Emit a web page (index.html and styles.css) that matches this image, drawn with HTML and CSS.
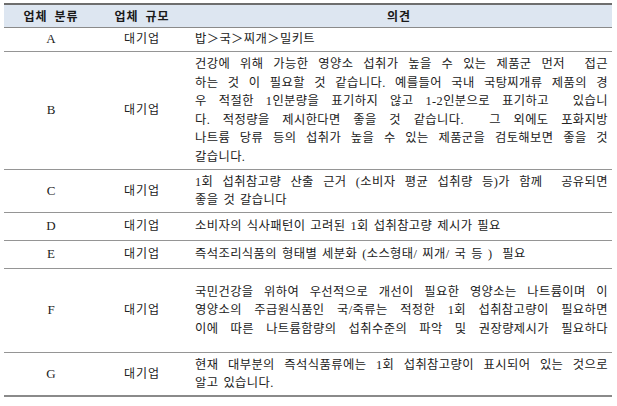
FILE: index.html
```html
<!DOCTYPE html>
<html lang="ko">
<head>
<meta charset="utf-8">
<title>업체 의견</title>
<link rel="stylesheet" href="styles.css">
</head>
<body>
<table class="opinions">
  <colgroup>
    <col class="c-kind">
    <col class="c-size">
    <col class="c-text">
  </colgroup>
  <thead>
    <tr>
      <th>업체 분류</th>
      <th>업체 규모</th>
      <th>의견</th>
    </tr>
  </thead>
  <tbody>
    <tr class="r-a">
      <td class="lab">A</td>
      <td class="size">대기업</td>
      <td class="txt"><span class="ln">밥＞국＞찌개＞밀키트</span></td>
    </tr>
    <tr class="r-b">
      <td class="lab">B</td>
      <td class="size">대기업</td>
      <td class="txt">
        <span class="ln j">건강에 위해 가능한 영양소 섭취가 높을 수 있는 제품군 먼저 &nbsp;접근</span>
        <span class="ln j">하는 것 이 필요할 것 같습니다. 예를들어 국내 국탕찌개류 제품의 경</span>
        <span class="ln j">우 적절한 1인분량을 표기하지 않고 1-2인분으로 표기하고 &nbsp;있습니</span>
        <span class="ln j">다. 적정량을 제시한다면 좋을 것 같습니다. &nbsp;그 외에도 포화지방</span>
        <span class="ln j">나트륨 당류 등의 섭취가 높을 수 있는 제품군을 검토해보면 좋을 것</span>
        <span class="ln">갈습니다.</span>
      </td>
    </tr>
    <tr class="r-c">
      <td class="lab">C</td>
      <td class="size">대기업</td>
      <td class="txt">
        <span class="ln j">1회 섭취참고량 산출 근거 (소비자 평균 섭취량 등)가 함께 &nbsp;공유되면</span>
        <span class="ln">좋을 것 갈습니다</span>
      </td>
    </tr>
    <tr class="r-d">
      <td class="lab">D</td>
      <td class="size">대기업</td>
      <td class="txt"><span class="ln">소비자의 식사패턴이 고려된 1회 섭취참고량 제시가 필요</span></td>
    </tr>
    <tr class="r-e">
      <td class="lab">E</td>
      <td class="size">대기업</td>
      <td class="txt"><span class="ln">즉석조리식품의 형태별 세분화 (소스형태/ 찌개/ 국 등 ) &nbsp;필요</span></td>
    </tr>
    <tr class="r-f">
      <td class="lab">F</td>
      <td class="size">대기업</td>
      <td class="txt">
        <span class="ln j">국민건강을 위하여 우선적으로 개선이 필요한 영양소는 나트륨이며 이</span>
        <span class="ln j">영양소의 주급원식품인 국/죽류는 적정한 1회 섭취참고량이 필요하면</span>
        <span class="ln j">이에 따른 나트륨함량의 섭취수준의 파악 및 권장량제시가 필요하다</span>
      </td>
    </tr>
    <tr class="r-g">
      <td class="lab">G</td>
      <td class="size">대기업</td>
      <td class="txt">
        <span class="ln j">현재 대부분의 즉석식품류에는 1회 섭취참고량이 표시되어 있는 것으로</span>
        <span class="ln">알고 있습니다.</span>
      </td>
    </tr>
  </tbody>
</table>
</body>
</html>
```

FILE: styles.css
```css
html, body {
  margin: 0;
  padding: 0;
  background: #ffffff;
}

body {
  padding: 3px 0 0 4px;
  font-family: "Liberation Serif", "Noto Sans CJK KR", serif;
  color: #222222;
}

.opinions {
  width: 608px;
  border-collapse: collapse;
  table-layout: fixed;
  font-size: 12.3px;
  font-weight: 400;
  letter-spacing: 0.4px;
  word-spacing: 1.5px;
}

.c-kind { width: 94px; }
.c-size { width: 88px; }
.c-text { width: 426px; }

.opinions th {
  height: 22px;
  padding: 0;
  background: #dde6f1;
  border-top: 2px solid #6e6e6e;
  border-bottom: 1px solid #8a8a8a;
  font-weight: 700;
  font-size: 12px;
  letter-spacing: 1px;
  word-spacing: 3px;
  text-align: center;
  vertical-align: middle;
  color: #1a1a1a;
}

.opinions td {
  padding: 0;
  border-bottom: 1px solid #959595;
  vertical-align: middle;
  line-height: 18.5px;
}

.opinions tbody tr:last-child td {
  border-bottom: 2px solid #8a8a8a;
}

.lab {
  text-align: center;
  font-size: 13px;
  letter-spacing: 0;
}

.size {
  text-align: center;
  font-size: 12px;
  letter-spacing: 1px;
}

.txt {
  padding: 0 4px 0 9px !important;
}

.ln {
  display: block;
  text-align: left;
  white-space: nowrap;
}

.ln.j {
  text-align: justify;
  text-align-last: justify;
}

.r-a td { height: 23px; }
.r-b td { height: 117px; }
.r-c td { height: 42px; }
.r-d td { height: 27px; }
.r-e td { height: 27px; }
.r-f td { height: 83px; }
.r-g td { height: 42px; }
```
